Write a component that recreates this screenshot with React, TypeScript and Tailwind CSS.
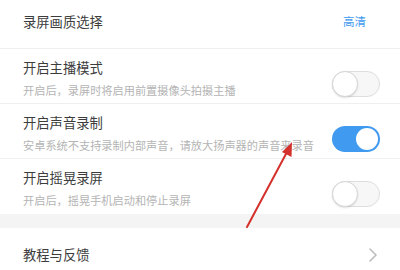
import React from 'react'

const cjk = { fontFamily: '"Noto Sans CJK SC", "Noto Sans", sans-serif' }

// Simple iOS-like switch
const Toggle = ({ on }: { on: boolean }) => (
  <div
    className={
      on
        ? 'relative w-[48px] h-[26px] rounded-full bg-[#3f9af0] shrink-0'
        : 'relative w-[48px] h-[26px] rounded-full bg-[#f7f7f7] border border-[#dedede] shrink-0'
    }
  >
    <div
      className={
        on
          ? 'absolute top-[2px] right-[2px] w-[22px] h-[22px] rounded-full bg-white'
          : 'absolute top-[-1px] left-[-1px] w-[26px] h-[26px] rounded-full bg-white border border-[#d6d6d6] shadow-[0_1px_2px_rgba(0,0,0,0.12)]'
      }
    />
  </div>
)

const SwitchRow = ({ title, desc, on, last }: { title: string; desc: string; on: boolean; last?: boolean }) => (
  <div className={last ? 'flex items-start h-[55px] pl-[23px] pr-[20px]' : 'flex items-start h-[55px] pl-[23px] pr-[20px] border-b border-[#efefef]'}>
    <div className="flex-1 pt-[9px]">
      <div className="text-[13.3px] leading-[20px] text-[#3c3c3c]">{title}</div>
      <div className="mt-[4px] text-[11.2px] leading-[16px] text-[#b4b4b4] whitespace-nowrap">{desc}</div>
    </div>
    <div className="mt-[22px]">
      <Toggle on={on} />
    </div>
  </div>
)

export default function App() {
  return (
    <div className="relative w-[400px] h-[270px] overflow-hidden bg-white" style={cjk}>
      <div className="flex items-center justify-between h-[49px] pl-[23px] pr-[34px] border-b border-[#efefef] pb-[5px]">
        <span className="text-[13.3px] text-[#3c3c3c]">录屏画质选择</span>
        <span className="text-[11.5px] text-[#3f9af0]">高清</span>
      </div>
      <SwitchRow title="开启主播模式" desc="开启后，录屏时将启用前置摄像头拍摄主播" on={false} />
      <SwitchRow title="开启声音录制" desc="安卓系统不支持录制内部声音，请放大扬声器的声音来录音" on={true} />
      <SwitchRow title="开启摇晃录屏" desc="开启后，摇晃手机启动和停止录屏" on={false} last />
      <div className="h-[14px] bg-[#f4f4f4]" />
      <div className="flex items-center justify-between h-[54px] pl-[23px] pr-[22px]">
        <span className="text-[13.3px] text-[#3c3c3c]">教程与反馈</span>
        <svg width="10" height="16" viewBox="0 0 10 16" fill="none">
          <path d="M2 2 L8 8 L2 14" stroke="#bdbdbd" strokeWidth="1.6" strokeLinecap="round" strokeLinejoin="round" />
        </svg>
      </div>

      {/* red annotation arrow */}
      <svg className="absolute left-0 top-0 pointer-events-none" width="400" height="270">
        <line x1="247" y1="227" x2="287" y2="152" stroke="#d4302c" strokeWidth="2" strokeLinecap="round" />
        <polygon points="292,142 291.5,157 282,152" fill="#d4302c" />
      </svg>
    </div>
  )
}
